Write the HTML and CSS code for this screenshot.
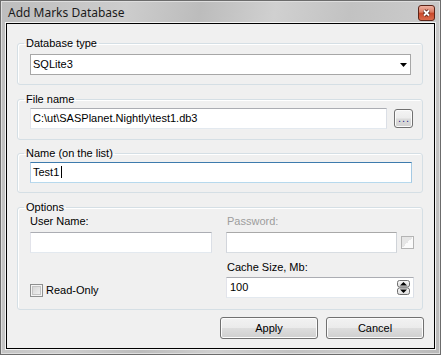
FILE: index.html
```html
<!DOCTYPE html>
<html lang="en">

<head>
    <meta charset="UTF-8">
    <title>Add Marks Database</title>
    <link rel="stylesheet" href="styles.css">
</head>

<body>
    <div class="window">
        <div class="titlebar">
            <span class="title">Add Marks Database</span>
            <svg class="close" width="17" height="16" viewBox="0 0 17 16">
                <defs>
                    <linearGradient id="closeBg" x1="0" y1="0" x2="0" y2="1">
                        <stop offset="0" stop-color="#efb5a6" />
                        <stop offset=".45" stop-color="#dc7c63" />
                        <stop offset=".5" stop-color="#c8472a" />
                        <stop offset="1" stop-color="#dc6e4f" />
                    </linearGradient>
                </defs>
                <rect x=".5" y=".5" width="16" height="15" rx="2.5" fill="url(#closeBg)" stroke="#5b2418" />
                <path d="M6 5.5l5 5M11 5.5l-5 5" stroke="#4a1a10" stroke-width="3.4" />
                <path d="M6 5.5l5 5M11 5.5l-5 5" stroke="#fff" stroke-width="1.9" />
            </svg>
        </div>
        <div class="client">
            <fieldset class="group g-type">
                <legend>Database type</legend>
                <div class="group-body">
                    <div class="combo">
                        <span>SQLite3</span>
                        <svg class="arrow" width="7" height="4" viewBox="0 0 7 4">
                            <polygon points="0,0 7,0 3.5,4" fill="#000" />
                        </svg>
                    </div>
                </div>
            </fieldset>

            <fieldset class="group g-file">
                <legend>File name</legend>
                <div class="group-body row">
                    <div class="edit grow">C:\ut\SASPlanet.Nightly\test1.db3</div>
                    <div class="dots">...</div>
                </div>
            </fieldset>

            <fieldset class="group g-name">
                <legend>Name (on the list)</legend>
                <div class="group-body">
                    <div class="edit focused">Test1<span class="caret"></span></div>
                </div>
            </fieldset>

            <fieldset class="group g-options">
                <legend>Options</legend>
                <div class="group-body cols">
                    <div class="col-left">
                        <div class="label">User Name:</div>
                        <div class="edit field"></div>
                        <div class="check-row">
                            <span class="check"></span>
                            <span>Read-Only</span>
                        </div>
                    </div>
                    <div class="col-right">
                        <div class="label disabled">Password:</div>
                        <div class="row pass-row">
                            <div class="edit pass"></div>
                            <span class="check small-off"></span>
                        </div>
                        <div class="label cache-label">Cache Size, Mb:</div>
                        <div class="edit spin field">
                            <span>100</span>
                            <svg class="spin-btns" width="13" height="15" viewBox="0 0 13 15">
                                <defs>
                                    <linearGradient id="spinBg" x1="0" y1="0" x2="0" y2="1">
                                        <stop offset="0" stop-color="#fbfbfb" />
                                        <stop offset="1" stop-color="#dadada" />
                                    </linearGradient>
                                </defs>
                                <rect x=".5" y=".5" width="12" height="6.5" rx="2" fill="url(#spinBg)" stroke="#6f6f6f" />
                                <rect x=".5" y="8" width="12" height="6.5" rx="2" fill="url(#spinBg)" stroke="#6f6f6f" />
                                <polygon points="3,5.5 10,5.5 6.5,2" fill="#000" />
                                <polygon points="3,9.5 10,9.5 6.5,13" fill="#000" />
                            </svg>
                        </div>
                    </div>
                </div>
            </fieldset>

            <div class="buttons">
                <div class="btn">Apply</div>
                <div class="btn">Cancel</div>
            </div>
        </div>
    </div>
</body>

</html>
```

FILE: styles.css
```css
html, body {
    margin: 0;
    padding: 0;
}

body {
    background: #bfbfbf;
    font-family: "Liberation Sans", Arial, sans-serif;
    font-size: 11px;
    color: #000;
}

.window {
    box-sizing: border-box;
    width: 441px;
    height: 355px;
    border: 1px solid #6c6c6c;
    padding: 0 5px 5px;
    display: flex;
    flex-direction: column;
    background: linear-gradient(100deg, #bdbdbd 0%, #cdcdcd 25%, #bcbcbc 40%, #d0d0d0 55%, #c2c2c2 70%, #cacaca 85%, #b9b9b9 100%);
    box-shadow: inset 1px 1px 0 #dedede, inset -1px -1px 0 #dedede;
}

.titlebar {
    height: 22px;
    display: flex;
    align-items: flex-start;
    justify-content: space-between;
}

.title {
    font-family: "Noto Sans", "Open Sans", sans-serif;
    font-size: 12px;
    line-height: 16px;
    padding: 4px 0 0 2px;
    color: #1b1b1b;
}

.close {
    margin-top: 4px;
    display: block;
}

.client {
    flex: 1;
    background: #f0f0f0;
    border: 1px solid #000;
    box-shadow: 0 0 0 1px #f4f4f4;
    padding: 13px 11px 9px 10px;
    display: flex;
    flex-direction: column;
}

/* group boxes */
.group {
    margin: 0;
    padding: 0;
    min-inline-size: 0;
    border: 1px solid #d5dfe5;
    border-radius: 3px;
    box-shadow: inset 1px 1px 0 #fff;
}

.group legend {
    margin-left: 6px;
    padding: 0 2px;
    line-height: 13px;
}

.g-file, .g-options { margin-top: 8px; }
.g-name { margin-top: 7px; }

.g-type .group-body { padding: 4px 11px 9px 12px; }
.g-file .group-body { padding: 2px 9px 10px 12px; }
.g-name .group-body { padding: 2px 10px 9px 12px; }
.g-options .group-body { padding: 1px 8px 11px 12px; }

.row {
    display: flex;
    align-items: center;
}

/* edits */
.edit, .combo {
    box-sizing: border-box;
    height: 21px;
    line-height: 19px;
    background: #fff;
    padding-left: 2px;
    white-space: nowrap;
    border: 1px solid;
    border-color: #abadb3 #dbdfe6 #e3e9ef #e2e3ea;
}

.grow { flex: 1; }

.edit.focused {
    border-color: #3d7bad #a4c9e3 #b7d9ed #b5cfe7;
}

.caret {
    display: inline-block;
    width: 1px;
    height: 12px;
    background: #000;
    margin-left: 2px;
    vertical-align: -2px;
}

.combo {
    border-color: #a7a7a7;
    display: flex;
    align-items: center;
    justify-content: space-between;
}

.arrow {
    margin-right: 3px;
    margin-top: 1px;
}

.dots {
    box-sizing: border-box;
    width: 19px;
    height: 19px;
    margin-left: 7px;
    border: 1px solid #707070;
    border-radius: 3px;
    background: linear-gradient(#f4f4f4, #ececec 48%, #dcdcdc 52%, #d2d2d2);
    box-shadow: inset 0 0 0 1px #fbfbfb;
    text-align: center;
    line-height: 17px;
    color: #2a1f8a;
    letter-spacing: 1px;
    padding-left: 1px;
}

/* options */
.cols {
    display: flex;
    gap: 14px;
}

.col-left { width: 182px; }
.col-right { width: 188px; }

.label {
    line-height: 13px;
}

.col-right .label { padding-left: 1px; }

.label.disabled { color: #9d9d9d; }

.field, .pass-row { margin-top: 4px; }

.pass {
    flex: 1;
    border-color: #a9a9a9 #cfd3d8 #d8dde2 #d2d5db;
}

.cache-label { margin-top: 8px; }
.spin { margin-top: 3px; }

.spin {
    display: flex;
    align-items: center;
    justify-content: space-between;
    padding-left: 3px;
}

.spin-btns {
    margin-right: 3px;
    display: block;
}

.check-row {
    margin-top: 31px;
    display: flex;
    align-items: center;
    gap: 3px;
    line-height: 13px;
}

.check {
    box-sizing: border-box;
    width: 13px;
    height: 13px;
    border: 1px solid #8e8f8f;
    background: linear-gradient(135deg, #cfcfcf, #f6f6f6);
    box-shadow: inset 0 0 0 1px #f4f4f4, inset 0 0 0 2px #c4c4c4;
}

.small-off {
    margin-left: 4px;
    border-color: #b4b4b4;
    background: linear-gradient(135deg, #e6e6e6 50%, #fbfbfb 50%);
    box-shadow: none;
}

/* bottom buttons */
.buttons {
    margin-top: 7px;
    margin-right: -1px;
    display: flex;
    justify-content: flex-end;
    gap: 8px;
}

.btn {
    box-sizing: border-box;
    width: 98px;
    height: 22px;
    line-height: 20px;
    text-align: center;
    border: 1px solid #707070;
    border-radius: 3px;
    background: linear-gradient(#f2f2f2, #ebebeb 48%, #dddddd 52%, #cfcfcf);
    box-shadow: inset 0 0 0 1px #fcfcfc;
}
```
